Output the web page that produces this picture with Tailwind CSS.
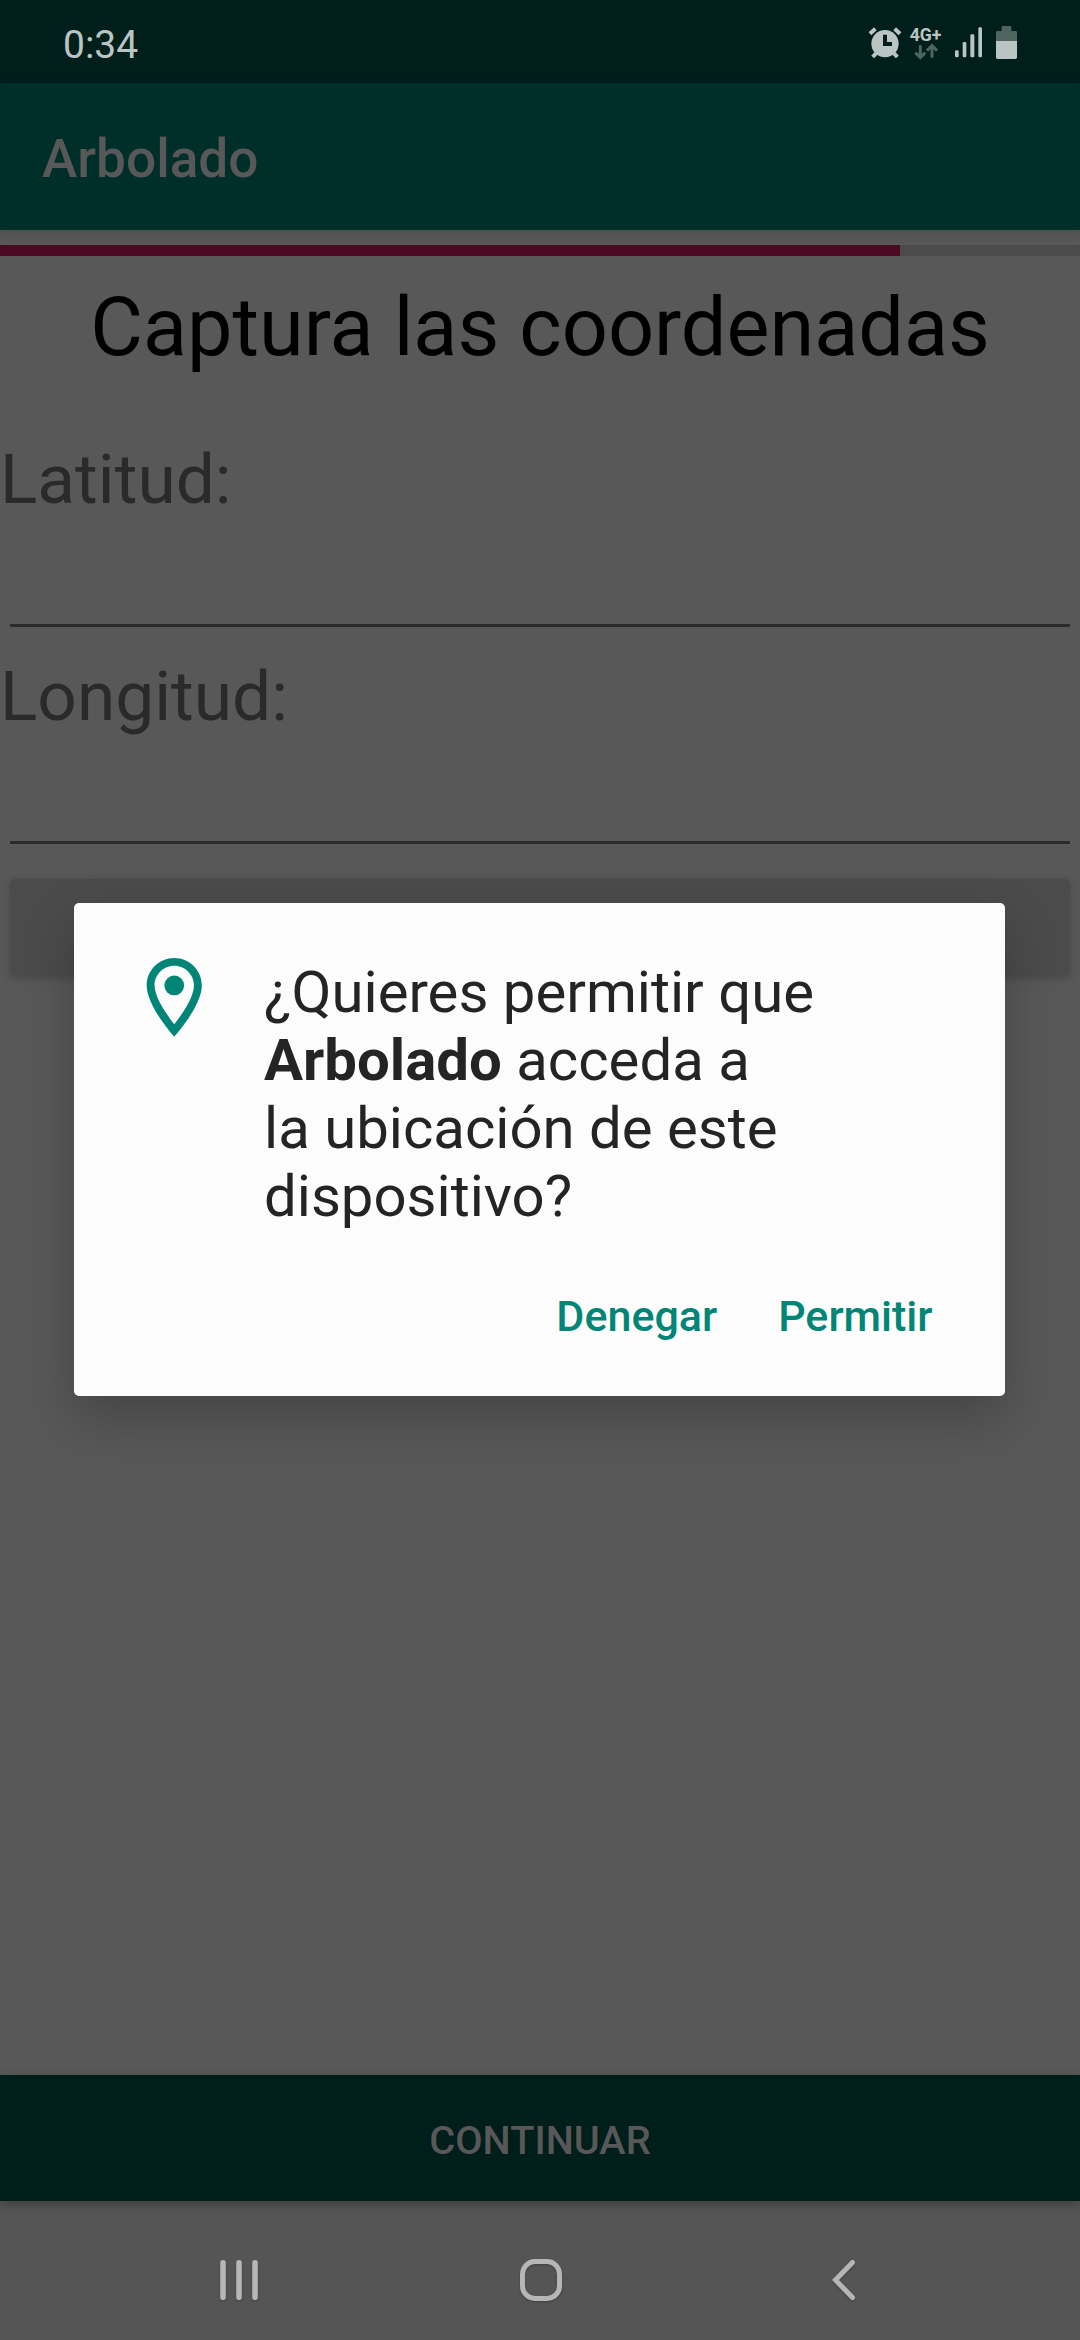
<!DOCTYPE html>
<html lang="es">
<head>
<meta charset="utf-8">
<title>Arbolado</title>
<script src="https://cdn.jsdelivr.net/npm/@tailwindcss/browser@4"></script>
</head>
<body class="relative flex h-[2340px] w-[1080px] flex-col overflow-hidden bg-[#585858] font-['Roboto',sans-serif]">

  <!-- Status bar -->
  <div class="flex h-[83px] shrink-0 items-start justify-between bg-[#001e1a] pr-[63px] pl-[63px] text-[#bac5c3]">
    <div class="mt-[20px] text-[39px] leading-[50px]">0:34</div>
    <div class="flex h-[83px]">
      <svg class="mr-[8px] h-[83px] w-[34px]" viewBox="54 0 102 249" fill="none">
        <circle cx="105" cy="131" r="41" fill="currentColor"/>
        <path d="M60 101L76 86M150 101L134 86" stroke="currentColor" stroke-width="12"/>
        <path d="M78 160L68 171M132 160L142 171" stroke="currentColor" stroke-width="12"/>
        <path d="M105 104V132H126" stroke="#001e1a" stroke-width="12"/>
      </svg>
      <div class="mr-[14px] flex w-[31px] flex-col items-center">
        <div class="mt-[25px] text-[17.6px] leading-[20px] font-bold">4G+</div>
        <svg class="-mt-[2px] h-[18px] w-[24px]" viewBox="194 129 72 54" fill="none" stroke="#4f645f" stroke-width="9">
          <path d="M213 136V173M198 158L213 173L228 158"/>
          <path d="M248 173V137M233 152L248 137L263 152"/>
        </svg>
      </div>
      <svg class="mr-[14px] h-[83px] w-[27px]" viewBox="315 0 81 249" fill="currentColor">
        <rect x="315" y="151" width="11" height="21" rx="4"/>
        <rect x="338" y="126" width="11" height="46" rx="4"/>
        <rect x="361" y="103" width="12" height="69" rx="4"/>
        <rect x="385" y="82" width="11" height="90" rx="4"/>
      </svg>
      <svg class="h-[83px] w-[21px]" viewBox="438 0 63 249">
        <path d="M438 123V97Q438 93 442 93H455V82Q455 78 459 78H480Q484 78 484 82V93H497Q501 93 501 97V123Z" fill="#4f645f"/>
        <path d="M438 123H501V172Q501 177 496 177H443Q438 177 438 172Z" fill="currentColor"/>
      </svg>
    </div>
  </div>

  <!-- App bar -->
  <div class="z-10 flex h-[147px] shrink-0 items-center bg-[#002f2a] pt-[5px] pl-[42px] shadow-[0_3px_10px_rgba(0,0,0,0.14)]">
    <h1 class="text-[53.2px] leading-[62px] font-medium text-[#585858]">Arbolado</h1>
  </div>

  <!-- Progress -->
  <div class="mt-[15px] flex h-[11px] shrink-0 bg-[#4b4b4b]">
    <div class="w-[900px] bg-[#4c0a22]"></div>
  </div>

  <h2 class="mt-[24px] text-center text-[81px] leading-[96px] whitespace-nowrap text-black">Captura las coordenadas</h2>

  <!-- Coordinates -->
  <div class="mt-[63px] flex flex-col text-[69.4px] leading-[81px] text-[#2a2a2a]">
    <label>Latitud:</label>
    <div class="mx-[10px] mt-[104px] h-[3px] bg-[#2b2b2b]"></div>
    <label class="mt-[29px]">Longitud:</label>
    <div class="mx-[10px] mt-[104px] h-[3px] bg-[#2b2b2b]"></div>
  </div>
  <div class="mx-[10px] mt-[35px] h-[97px] shrink-0 rounded-[5px] bg-[#4b4b4b] shadow-[0_2px_8px_rgba(0,0,0,0.2)]"></div>

  <!-- Continue -->
  <div class="z-10 mt-auto flex h-[126px] shrink-0 items-center justify-center bg-[#001e1a] pt-[5px] text-[39.7px] leading-[48px] font-medium text-[#585858] shadow-[0_4px_10px_rgba(0,0,0,0.25)]">CONTINUAR</div>

  <!-- Navigation bar -->
  <div class="flex h-[139px] shrink-0 items-center bg-[#555555] pt-[19px] pl-[218px] text-[#b6b6b6]">
    <svg class="h-[48px] w-[42px] drop-shadow-[0_1px_1px_rgba(0,0,0,0.25)]" viewBox="0 0 42 48" fill="none" stroke="currentColor" stroke-width="5.6" stroke-linecap="round">
      <path d="M5 6.8V41.2M21 6.8V41.2M37 6.8V41.2"/>
    </svg>
    <svg class="ml-[257px] h-[48px] w-[48px] drop-shadow-[0_1px_1px_rgba(0,0,0,0.25)]" viewBox="0 0 48 48" fill="none" stroke="currentColor" stroke-width="5">
      <rect x="5.5" y="5.5" width="37" height="37" rx="12.5"/>
    </svg>
    <svg class="ml-[261px] h-[48px] w-[36px] drop-shadow-[0_1px_1px_rgba(0,0,0,0.25)]" viewBox="0 0 36 48" fill="none" stroke="currentColor" stroke-width="5" stroke-linecap="round">
      <path d="M26.5 6.5L9.5 24L26.5 41.5"/>
    </svg>
  </div>

  <!-- Permission dialog -->
  <div class="absolute top-[903px] left-[74px] z-20 flex h-[493px] w-[931px] flex-col rounded-[5px] bg-[#fcfcfc] shadow-[0_22px_52px_rgba(0,0,0,0.22)]">
    <div class="flex pl-[53px]">
      <svg class="mt-[47px] h-[94.5px] w-[94.5px] shrink-0 text-[#008577]" viewBox="0 0 24 24" fill="currentColor">
        <path d="M12 2C8.13 2 5 5.13 5 9c0 5.25 7 13 7 13s7-7.75 7-13c0-3.87-3.13-7-7-7zM7 9c0-2.76 2.24-5 5-5s5 2.24 5 5c0 2.88-2.88 7.19-5 9.88C9.92 16.21 7 11.85 7 9z"/>
        <circle cx="12" cy="9" r="2.5"/>
      </svg>
      <p class="mt-[55px] ml-[42.5px] text-[58.1px] leading-[68px] whitespace-nowrap text-[#242424]">¿Quieres permitir que<br><b class="font-bold">Arbolado</b> acceda a<br>la ubicación de este<br>dispositivo?</p>
    </div>
    <div class="mt-[61px] flex justify-end gap-[61px] pr-[72.5px] text-[43px] leading-[51px] font-medium text-[#008577]">
      <span>Denegar</span>
      <span>Permitir</span>
    </div>
  </div>
</body>
</html>
